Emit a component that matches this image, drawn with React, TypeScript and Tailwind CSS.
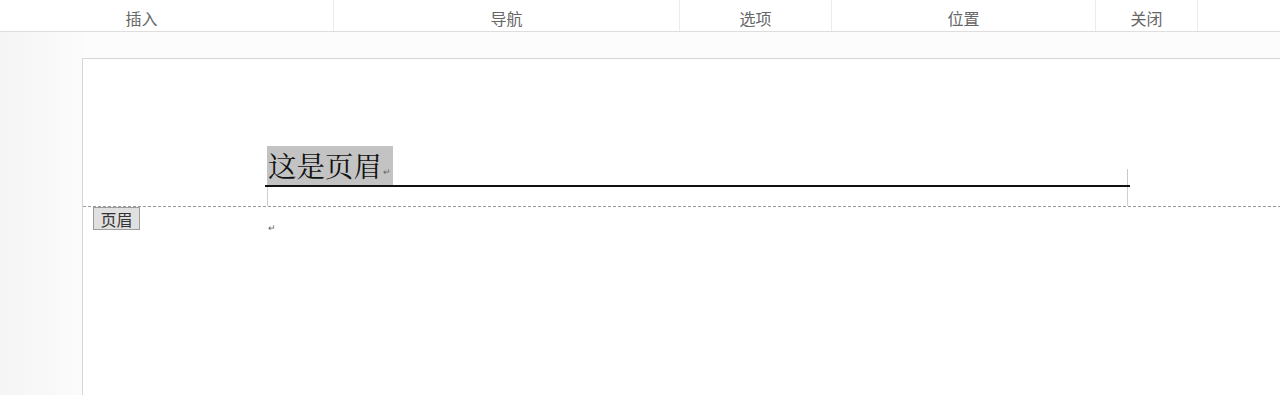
import React from 'react'

const cjk = { fontFamily: '"Noto Sans CJK SC", "Noto Sans", sans-serif' }
const serifCjk = { fontFamily: '"Noto Serif CJK SC", "Noto Sans CJK SC", serif' }

const tabs = [
  { label: '插入', w: 'w-[334px] pr-[50px]' },
  { label: '导航', w: 'w-[346px]' },
  { label: '选项', w: 'w-[152px]' },
  { label: '位置', w: 'w-[264px]' },
  { label: '关闭', w: 'w-[102px]' },
]

function ReturnMark({ className = '' }: { className?: string }) {
  return <span className={`text-[9px] leading-none text-[#666] ${className}`}>↵</span>
}

export default function App() {
  return (
    <div className="h-[395px] w-[1280px] overflow-hidden bg-white" style={cjk}>
      {/* ribbon tabs */}
      <div className="flex h-[32px] border-b border-[#dedede] bg-white">
        {tabs.map((t) => (
          <div
            key={t.label}
            className={`${t.w} flex h-full items-center justify-center border-r border-[#ececec] pt-[4px] text-[16px] text-[#666]`}
          >
            {t.label}
          </div>
        ))}
      </div>

      <div className="flex h-[363px]">
        <div className="w-[82px] bg-gradient-to-r from-[#f5f5f5] to-[#fbfbfb]" />

        <div className="flex flex-1 flex-col bg-[#fcfcfc] pt-[26px]">
          <div className="flex-1 border-l border-t border-[#d6d6d6] bg-white">
            <div className="h-[87px]" />

            {/* header text with underline */}
            <div className="ml-[182px] flex w-[865px] items-end border-b-2 border-[#111]">
              <div className="ml-[2px] flex h-[39px] w-[126px] items-center bg-[#c3c3c3] pl-[1px]">
                <span className="text-[28.5px] leading-none text-[#111]" style={serifCjk}>
                  这是页眉
                </span>
                <ReturnMark className="ml-[1px] mt-[12px]" />
              </div>
              <div className="flex-1" />
              <div className="mr-[2px] h-[16px] w-px bg-[#c8c8c8]" />
            </div>

            {/* margin corner marks */}
            <div className="ml-[184px] h-[19px] w-[861px] border-x border-[#cfcfcf]" />

            {/* header/body separator */}
            <div className="h-px bg-[repeating-linear-gradient(to_right,#9a9a9a_0_3px,transparent_3px_5px)]" />

            {/* body */}
            <div className="flex items-start">
              <div className="ml-[10px] flex h-[23px] w-[47px] items-center justify-center border border-[#9c9c9c] bg-[#e0e0e0] text-[16px] leading-none text-[#333]">
                页眉
              </div>
              <ReturnMark className="ml-[128px] mt-[16px]" />
            </div>
          </div>
        </div>
      </div>
    </div>
  )
}
